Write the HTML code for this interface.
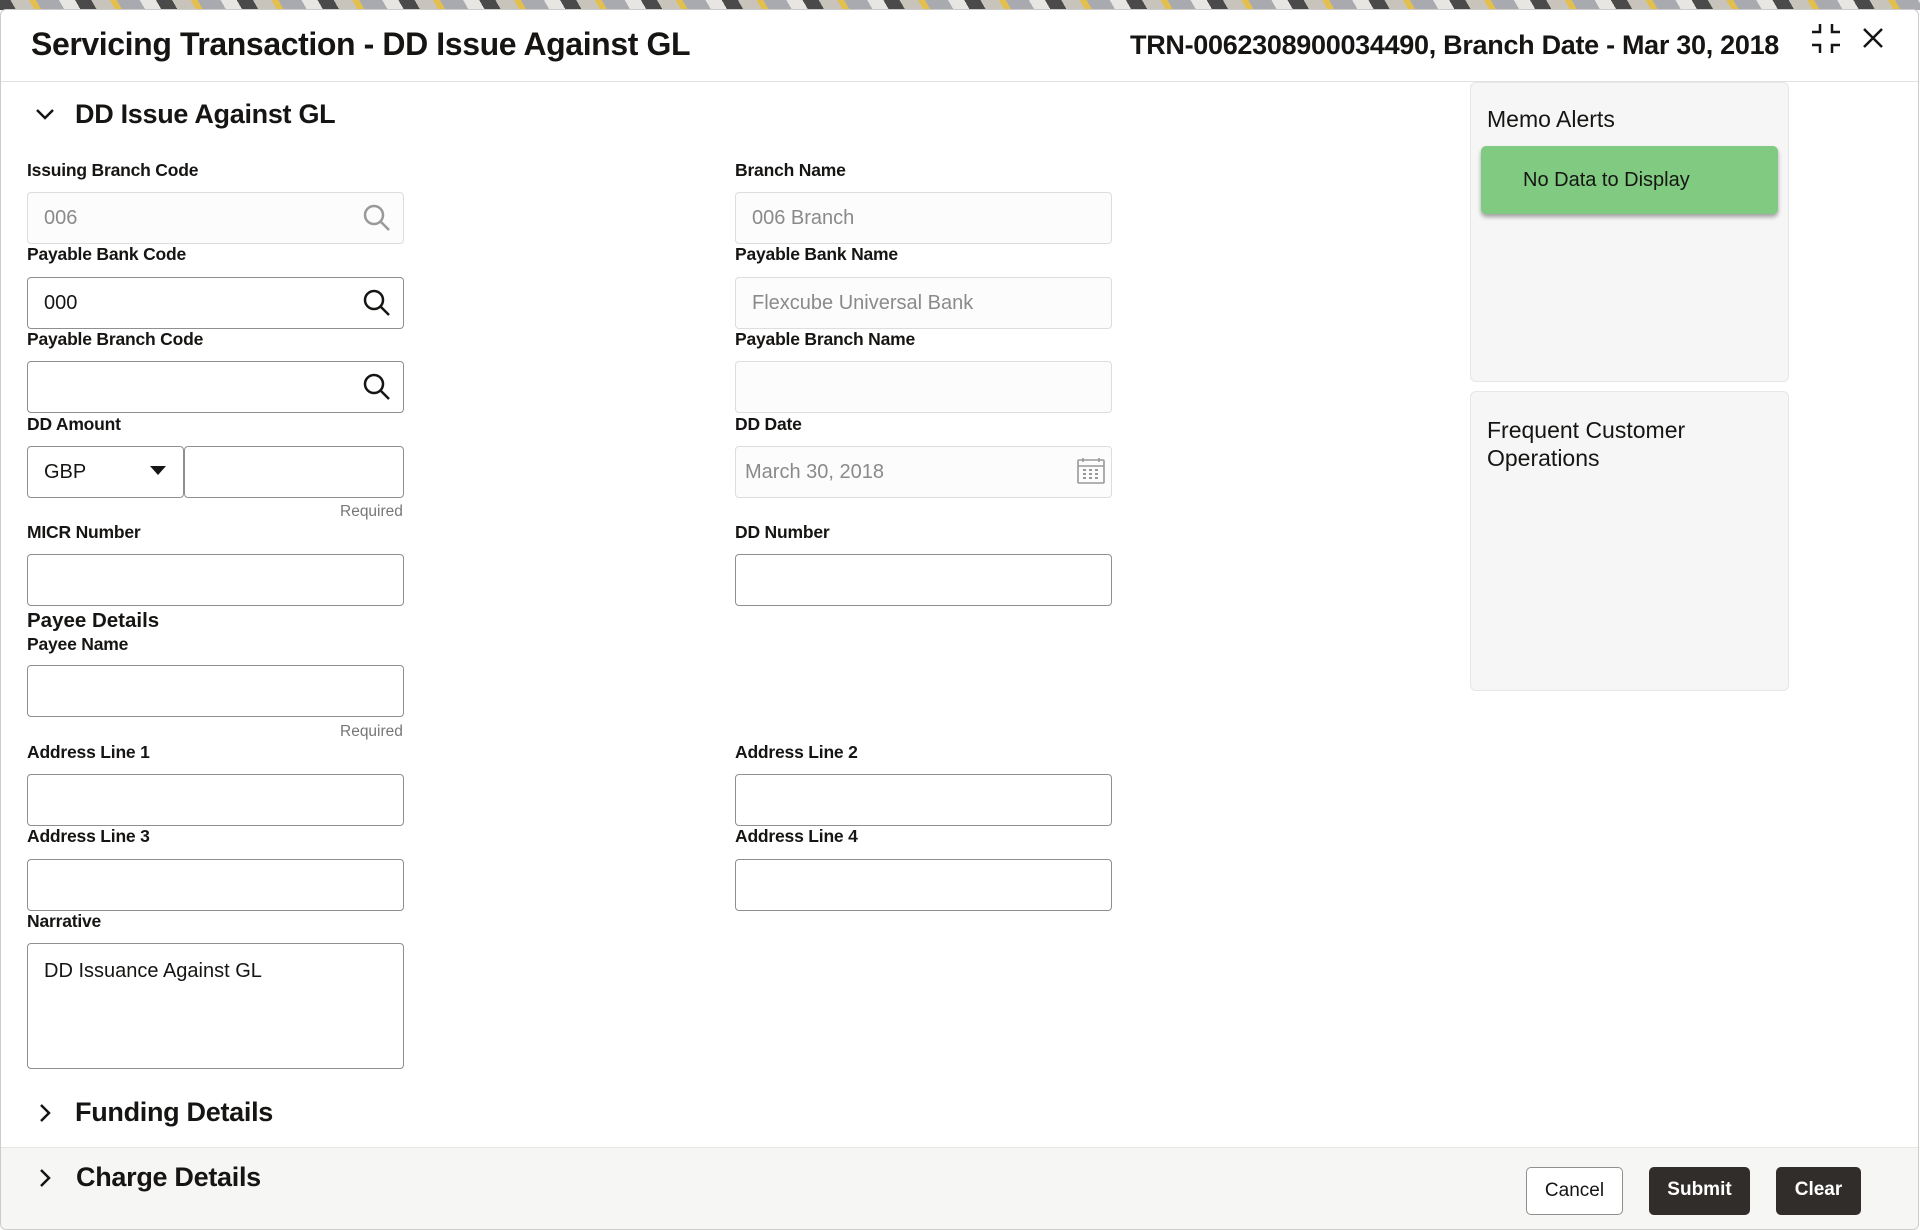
<!DOCTYPE html>
<html><head><meta charset="utf-8"><style>
*{box-sizing:border-box;margin:0;padding:0}
body{width:1920px;height:1230px;overflow:hidden;background:#fff;font-family:"Liberation Sans",sans-serif;color:#161513;position:relative}
.abs{position:absolute}
.top{left:0;top:0;width:1920px;height:10px;background:repeating-linear-gradient(60deg,#4a4a4a 0 14px,#c8c4bc 14px 30px,#e3c04d 30px 36px,#a9a9b0 36px 56px,#e8e6e2 56px 70px)}
.win{left:0;top:9px;width:1919px;height:1221px;border:1px solid #ccc;border-radius:6px;background:#fff}
.lbl{position:absolute;font-size:17.5px;font-weight:bold;color:#161513;letter-spacing:-0.2px}
.inp{position:absolute;height:52px;border:1px solid #8f8f8f;border-radius:4px;background:#fff;font-size:20px;padding:0 16px;line-height:50px}
.ro{border-color:#ddd;background:#fcfcfc;color:#8a8a8a}
.req{position:absolute;font-size:15.5px;color:#777}
.sec{position:absolute;font-size:27px;font-weight:bold;letter-spacing:-0.3px}
.btn{position:absolute;top:1167px;height:48px;border-radius:5px;font-size:19px;font-weight:bold;text-align:center;line-height:46px}
</style></head><body>
<div class="abs top"></div>
<div class="abs win"></div>
<div class="abs" style="left:31px;top:26px;font-size:32px;font-weight:bold;letter-spacing:-0.4px">Servicing Transaction - DD Issue Against GL</div>
<div class="abs" style="right:141px;top:30px;font-size:27px;font-weight:bold;letter-spacing:-0.3px">TRN-0062308900034490, Branch Date - Mar 30, 2018</div>
<svg class="abs" style="left:1810px;top:23px" width="32" height="32" viewBox="0 0 32 32" fill="none" stroke="#161513" stroke-width="2.5"><path d="M2 9h8V1M22 1v8h8M2 22h8v8M22 30v-8h8"/></svg>
<svg class="abs" style="left:1862px;top:27px" width="22" height="22" viewBox="0 0 22 22" stroke="#161513" stroke-width="2.5"><path d="M2 2L20 20M20 2L2 20"/></svg>
<div class="abs" style="left:1px;top:81px;width:1917px;height:1px;background:#e0e0e0"></div>
<svg class="abs" style="left:35px;top:107px" width="20" height="14" viewBox="0 0 20 14" fill="none" stroke="#161513" stroke-width="2.5"><path d="M2 3l8 8 8-8"/></svg>
<div class="sec" style="left:75px;top:99px">DD Issue Against GL</div>

<div class="lbl" style="left:27px;top:160px">Issuing Branch Code</div>
<div class="inp ro" style="left:27px;top:192px;width:377px">006</div>
<div class="lbl" style="left:735px;top:160px">Branch Name</div>
<div class="inp ro" style="left:735px;top:192px;width:377px">006 Branch</div>

<div class="lbl" style="left:27px;top:244px">Payable Bank Code</div>
<div class="inp" style="left:27px;top:277px;width:377px">000</div>
<div class="lbl" style="left:735px;top:244px">Payable Bank Name</div>
<div class="inp ro" style="left:735px;top:277px;width:377px">Flexcube Universal Bank</div>

<div class="lbl" style="left:27px;top:329px">Payable Branch Code</div>
<div class="inp" style="left:27px;top:361px;width:377px"></div>
<div class="lbl" style="left:735px;top:329px">Payable Branch Name</div>
<div class="inp ro" style="left:735px;top:361px;width:377px"></div>

<svg class="abs" style="left:362px;top:203px" width="30" height="30" viewBox="0 0 30 30" fill="none" stroke="#999" stroke-width="2.5"><circle cx="12" cy="12" r="9"/><path d="M19 19l8 8"/></svg>
<svg class="abs" style="left:362px;top:288px" width="30" height="30" viewBox="0 0 30 30" fill="none" stroke="#161513" stroke-width="2.5"><circle cx="12" cy="12" r="9"/><path d="M19 19l8 8"/></svg>
<svg class="abs" style="left:362px;top:372px" width="30" height="30" viewBox="0 0 30 30" fill="none" stroke="#161513" stroke-width="2.5"><circle cx="12" cy="12" r="9"/><path d="M19 19l8 8"/></svg>

<div class="lbl" style="left:27px;top:414px">DD Amount</div>
<div class="inp" style="left:27px;top:446px;width:157px">GBP</div>
<svg class="abs" style="left:150px;top:466px" width="16" height="10" viewBox="0 0 16 10"><path d="M0 0h16L8 9z" fill="#161513"/></svg>
<div class="inp" style="left:184px;top:446px;width:220px"></div>
<div class="req" style="left:340px;top:503px">Required</div>
<div class="lbl" style="left:735px;top:414px">DD Date</div>
<div class="inp ro" style="left:735px;top:446px;width:377px;padding-left:9px">March 30, 2018</div>
<svg class="abs" style="left:1076px;top:457px" width="30" height="28" viewBox="0 0 30 28" fill="none" stroke="#999" stroke-width="1.6"><rect x="2" y="3" width="26" height="23" rx="1"/><path d="M2 9h26M7 1v4M23 1v4"/><path d="M7 13h3M13 13h3M19 13h3M7 17h3M13 17h3M19 17h3M7 21h3M13 21h3M19 21h3" stroke-width="2"/></svg>

<div class="lbl" style="left:27px;top:522px">MICR Number</div>
<div class="inp" style="left:27px;top:554px;width:377px"></div>
<div class="lbl" style="left:735px;top:522px">DD Number</div>
<div class="inp" style="left:735px;top:554px;width:377px"></div>

<div class="abs" style="left:27px;top:609px;font-size:20.5px;font-weight:bold">Payee Details</div>
<div class="lbl" style="left:27px;top:634px">Payee Name</div>
<div class="inp" style="left:27px;top:665px;width:377px"></div>
<div class="req" style="left:340px;top:723px">Required</div>

<div class="lbl" style="left:27px;top:742px">Address Line 1</div>
<div class="inp" style="left:27px;top:774px;width:377px"></div>
<div class="lbl" style="left:735px;top:742px">Address Line 2</div>
<div class="inp" style="left:735px;top:774px;width:377px"></div>

<div class="lbl" style="left:27px;top:826px">Address Line 3</div>
<div class="inp" style="left:27px;top:859px;width:377px"></div>
<div class="lbl" style="left:735px;top:826px">Address Line 4</div>
<div class="inp" style="left:735px;top:859px;width:377px"></div>

<div class="lbl" style="left:27px;top:911px">Narrative</div>
<div class="inp" style="left:27px;top:943px;width:377px;height:126px;line-height:1;padding-top:17px">DD Issuance Against GL</div>

<svg class="abs" style="left:38px;top:1103px" width="14" height="20" viewBox="0 0 14 20" fill="none" stroke="#161513" stroke-width="2.5"><path d="M3 2l8 8-8 8"/></svg>
<div class="sec" style="left:75px;top:1097px">Funding Details</div>

<div class="abs" style="left:1px;top:1147px;width:1917px;height:82px;background:#f6f6f5;border-top:1px solid #e6e6e6;border-radius:0 0 6px 6px"></div>
<svg class="abs" style="left:38px;top:1168px" width="14" height="20" viewBox="0 0 14 20" fill="none" stroke="#161513" stroke-width="2.5"><path d="M3 2l8 8-8 8"/></svg>
<div class="sec" style="left:76px;top:1162px">Charge Details</div>
<div class="btn" style="left:1526px;width:97px;border:1px solid #8f8f8f;background:#fff;font-weight:normal">Cancel</div>
<div class="btn" style="left:1649px;width:101px;background:#312d2a;color:#fff">Submit</div>
<div class="btn" style="left:1776px;width:85px;background:#312d2a;color:#fff">Clear</div>

<div class="abs" style="left:1470px;top:82px;width:319px;height:300px;background:#f6f6f6;border:1px solid #e6e6e6;border-radius:6px"></div>
<div class="abs" style="left:1487px;top:106px;font-size:23px">Memo Alerts</div>
<div class="abs" style="left:1481px;top:146px;width:297px;height:68px;background:#80ca82;border-radius:5px;box-shadow:0 3px 4px rgba(0,0,0,.35);font-size:20px;line-height:68px;padding-left:42px">No Data to Display</div>
<div class="abs" style="left:1470px;top:391px;width:319px;height:300px;background:#f6f6f6;border:1px solid #e6e6e6;border-radius:6px"></div>
<div class="abs" style="left:1487px;top:416px;font-size:23px;line-height:28px">Frequent Customer<br>Operations</div>
</body></html>
